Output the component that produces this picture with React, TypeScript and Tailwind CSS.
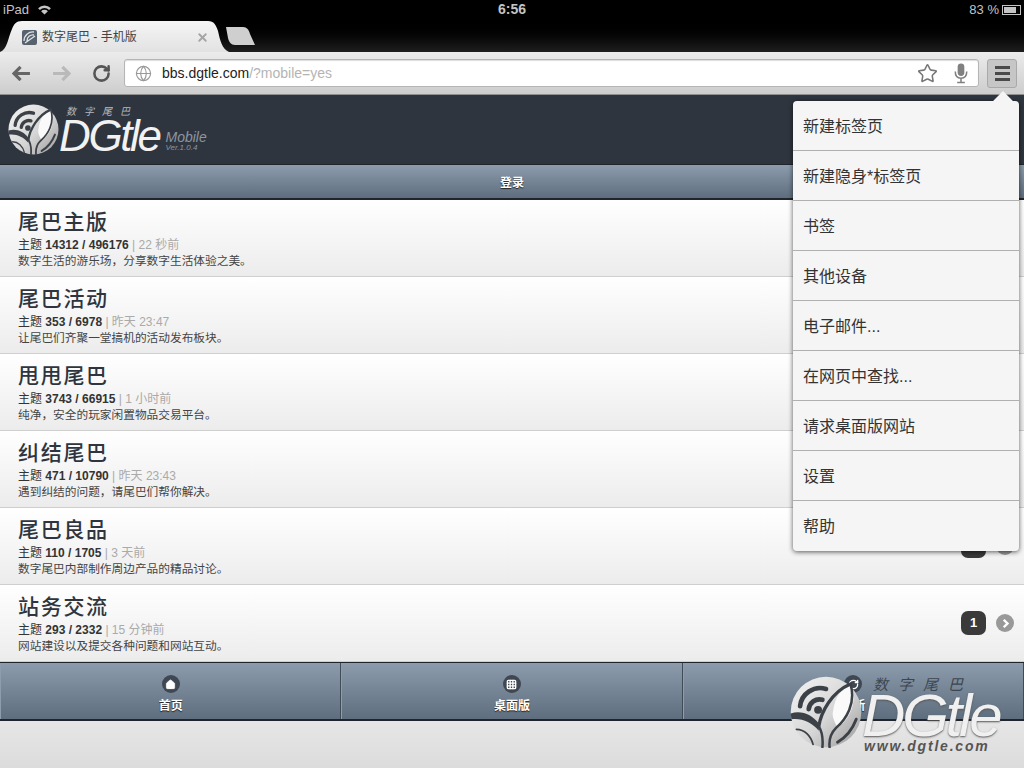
import React from 'react';
import { RotateCw, Star, Globe, X, Home, Grid3x3 } from 'lucide-react';

const FONT = '[font-family:"Liberation_Sans","Noto_Sans_CJK_SC",sans-serif]';

const boards = [
  { title: '尾巴主版', stats: '14312 / 496176', time: '22 秒前', desc: '数字生活的游乐场，分享数字生活体验之美。', badge: '' },
  { title: '尾巴活动', stats: '353 / 6978', time: '昨天 23:47', desc: '让尾巴们齐聚一堂搞机的活动发布板块。', badge: '' },
  { title: '甩甩尾巴', stats: '3743 / 66915', time: '1 小时前', desc: '纯净，安全的玩家闲置物品交易平台。', badge: '' },
  { title: '纠结尾巴', stats: '471 / 10790', time: '昨天 23:43', desc: '遇到纠结的问题，请尾巴们帮你解决。', badge: '' },
  { title: '尾巴良品', stats: '110 / 1705', time: '3 天前', desc: '数字尾巴内部制作周边产品的精品讨论。', badge: '3' },
  { title: '站务交流', stats: '293 / 2332', time: '15 分钟前', desc: '网站建设以及提交各种问题和网站互动。', badge: '1' },
];

const menuItems = ['新建标签页', '新建隐身*标签页', '书签', '其他设备', '电子邮件...', '在网页中查找...', '请求桌面版网站', '设置', '帮助'];

function LogoMark({ id, className }: { id: string; className: string }) {
  return (
    <svg viewBox="0 0 100 100" className={className}>
      <defs>
        <linearGradient id={id} x1="0" y1="0" x2="1" y2="1">
          <stop offset="0" stopColor="#f4f4f4" />
          <stop offset="0.55" stopColor="#d6d6d6" />
          <stop offset="1" stopColor="#9a9a9a" />
        </linearGradient>
      </defs>
      <circle cx="50" cy="50" r="49" fill={`url(#${id})`} />
      <path d="M60 48 C62 30 72 16 84 12 C94 30 86 58 66 72 C60 60 58 55 60 48Z" fill="#fafafa" />
      <path d="M1 52 C16 47 31 54 40 66 L40 76 C30 64 16 58 2 60Z" fill="#3c4148" />
      <g fill="none" stroke="#3c4148" strokeLinecap="round">
        <path d="M26 46 A15 15 0 0 1 45 33" strokeWidth="6.5" />
        <path d="M14 42 A28 28 0 0 1 50 18" strokeWidth="6.5" />
        <path d="M40 70 C43 50 58 22 84 11" strokeWidth="4.5" />
        <path d="M84 11 C92 38 78 60 64 72 C56 80 54 90 55 99" strokeWidth="3.5" />
        <path d="M40 70 C45 78 46 88 45 99" strokeWidth="3.5" />
        <path d="M9 74 C20 74 29 83 32 95" strokeWidth="2.5" />
        <path d="M92 60 C86 76 76 86 66 92" strokeWidth="4" />
      </g>
      <circle cx="39" cy="47" r="5.5" fill="#3c4148" />
    </svg>
  );
}

function RowArrow() {
  return (
    <span className="flex h-[18px] w-[18px] items-center justify-center rounded-full bg-[#999]">
      <svg viewBox="0 0 10 10" className="h-[11px] w-[11px]">
        <path d="M3.4 1.6 L6.8 5 L3.4 8.4" fill="none" stroke="#fff" strokeWidth="2.2" />
      </svg>
    </span>
  );
}

function FooterTab({ icon, label }: { icon: React.ReactNode; label: string }) {
  return (
    <div className="flex flex-1 flex-col items-center border-l border-r border-l-[#8d9dad] border-r-[#3f4b57] pt-[12px]">
      <span className="flex h-[18px] w-[18px] items-center justify-center rounded-full bg-[#3f4852]">{icon}</span>
      <span className="mt-[3px] text-[12px] leading-[20px] font-bold text-white [text-shadow:0_1px_1px_#222]">{label}</span>
    </div>
  );
}

export default function App() {
  return (
    <div className={`relative flex h-[768px] w-[1024px] flex-col overflow-hidden bg-[#ddd] ${FONT}`}>
      {/* status bar */}
      <div className="flex h-[18px] items-center justify-between bg-black pt-[1px] pr-[3px] pl-[3px] text-[13px] text-[#c4c4c4]">
        <div className="flex flex-1 items-center gap-[8px]">
          <span>iPad</span>
          <svg viewBox="0 0 16 12" className="h-[11px] w-[15px]">
            <path d="M1 4.5 A10 10 0 0 1 15 4.5 L13 6.6 A7 7 0 0 0 3 6.6Z M4.3 7.8 A5.4 5.4 0 0 1 11.7 7.8 L8 11.5Z" fill="#c4c4c4" />
          </svg>
        </div>
        <span className="text-[14px] font-bold">6:56</span>
        <div className="flex flex-1 items-center justify-end gap-[3px]">
          <span>83 %</span>
          <span className="flex h-[10px] w-[19px] items-center border border-[#c4c4c4] p-[1px]">
            <span className="h-full w-[83%] bg-[#c4c4c4]" />
          </span>
        </div>
      </div>

      {/* tab strip */}
      <div className="relative h-[34px] bg-gradient-to-b from-black to-[#1e1e1e]">
        <svg viewBox="0 0 260 34" className="absolute top-0 left-0 h-[34px] w-[260px]">
          <defs>
            <linearGradient id="tabFill" x1="0" y1="0" x2="0" y2="1">
              <stop offset="0" stopColor="#f5f5f5" />
              <stop offset="1" stopColor="#e2e2e2" />
            </linearGradient>
          </defs>
          <path d="M0 34 C7 32 8 20 12 11 C14 6 16 3 22 3 L208 3 C214 3 216 7 218 13 C220 22 222 31 229 34Z" fill="url(#tabFill)" />
          <path d="M226 9 L243 9 C247 9 249 12 250 16 L255 27 L235 27 C231 27 229 24 228 20Z" fill="#cfcfcf" />
        </svg>
        <div className="absolute top-[10px] left-[22px] flex h-[18px] w-[187px] items-center">
          <span className="h-[15px] w-[15px] rounded-[2px] bg-[#56626e]">
            <svg viewBox="0 0 15 15" className="h-[15px] w-[15px]">
              <path d="M2 11 A9 9 0 0 1 12 2 M5 11 A6 6 0 0 1 12 5 M3 13 L13 6" fill="none" stroke="#dfe3e8" strokeWidth="1.3" />
            </svg>
          </span>
          <span className="ml-[5px] flex-1 text-[12px] text-[#444]">数字尾巴 - 手机版</span>
          <X className="h-[13px] w-[13px] text-[#a5a5a5]" strokeWidth={3.5} />
        </div>
      </div>

      {/* toolbar */}
      <div className="flex h-[43px] items-center border-b border-b-[#8f8f8f] bg-gradient-to-b from-[#ececec] to-[#cdcdcd] pr-[7px] pl-[12px]">
        <svg viewBox="0 0 20 16" className="h-[15px] w-[19px]">
          <path d="M9 1 L2 8 L9 15 M2.5 8 L19 8" fill="none" stroke="#666" strokeWidth="3.4" />
        </svg>
        <svg viewBox="0 0 20 16" className="ml-[21px] h-[15px] w-[19px]">
          <path d="M11 1 L18 8 L11 15 M17.5 8 L1 8" fill="none" stroke="#b9b9b9" strokeWidth="3.4" />
        </svg>
        <RotateCw className="ml-[21px] h-[19px] w-[19px] text-[#555]" strokeWidth={3.2} />
        <div className="ml-[13px] flex h-[28px] flex-1 items-center rounded-[3px] border border-[#b5b5b5] bg-white pr-[10px] pl-[10px] shadow-[inset_0_1px_1px_#ddd]">
          <Globe className="h-[17px] w-[17px] text-[#999]" strokeWidth={1.6} />
          <span className="ml-[10px] flex-1 text-[14px] text-[#222]">
            bbs.dgtle.com<span className="text-[#b4b4b4]">/?mobile=yes</span>
          </span>
          <Star className="h-[21px] w-[21px] text-[#777]" strokeWidth={1.8} />
          <svg viewBox="0 0 14 22" className="ml-[16px] h-[21px] w-[14px]">
            <rect x="3.5" y="0.5" width="7" height="13" rx="3.5" fill="#808080" />
            <path d="M1 9 C1 14 4 16 7 16 C10 16 13 14 13 9 M7 16 L7 20 M3 20.5 L11 20.5" fill="none" stroke="#808080" strokeWidth="1.6" />
          </svg>
        </div>
        <div className="ml-[8px] flex h-[29px] w-[30px] flex-col items-center justify-center gap-[3px] rounded-[3px] border border-[#a9a9a9] bg-[#c6c6c6]">
          <span className="h-[3px] w-[15px] bg-[#4a4a4a]" />
          <span className="h-[3px] w-[15px] bg-[#4a4a4a]" />
          <span className="h-[3px] w-[15px] bg-[#4a4a4a]" />
        </div>
      </div>

      {/* site header */}
      <div className="flex h-[69px] items-center bg-[#2f353e] pl-[8px]">
        <LogoMark id="logoHead" className="h-[51px] w-[51px]" />
        <div className="flex flex-col">
          <span className="pl-[7px] text-[10px] leading-[12px] tracking-[8px] text-[#b5b9be] italic">数字尾巴</span>
          <span className="text-[44px] leading-[36px] tracking-[-2.4px] text-[#f2f2f2] italic">DGtle</span>
        </div>
        <div className="mt-[22px] ml-[6px] flex flex-col text-[#8b96a2] italic">
          <span className="text-[14px] leading-[14px]">Mobile</span>
          <span className="text-[8px] leading-[8px]">Ver.1.0.4</span>
        </div>
      </div>

      {/* login bar */}
      <div className="flex h-[36px] items-center justify-center border-t border-b-2 border-t-[#20252b] border-b-[#20252b] bg-gradient-to-b from-[#8c9cac] to-[#5e6e7e] pt-[2px] text-[12px] font-bold text-white [text-shadow:0_1px_1px_#222]">
        登录
      </div>

      {/* board list */}
      <div className="flex flex-col">
        {boards.map((b) => (
          <div key={b.title} className="flex h-[77px] items-center border-b border-b-[#cfcfcf] bg-gradient-to-b from-white to-[#ececec] pr-[10px] pl-[18px]">
            <div className="flex flex-1 flex-col pt-[2px]">
              <span className="text-[21px] leading-[26px] font-medium tracking-[1.7px] text-[#2f353e]">{b.title}</span>
              <span className="mt-[2px] text-[12px] leading-[17px] text-[#333]">
                主题 <b className="font-bold">{b.stats}</b>
                <span className="text-[#aaa]"> | {b.time}</span>
              </span>
              <span className="-mt-[1px] text-[11.7px] leading-[16px] text-[#444]">{b.desc}</span>
            </div>
            {b.badge && (
              <span className="mr-[10px] flex h-[24px] w-[25px] items-center justify-center rounded-[7px] bg-[#3a3a3a] text-[13px] font-bold text-white">
                {b.badge}
              </span>
            )}
            <RowArrow />
          </div>
        ))}
      </div>

      {/* footer nav */}
      <div className="flex h-[59px] border-t border-b-2 border-t-[#20252b] border-b-[#20252b] bg-gradient-to-b from-[#8c9cac] to-[#5e6e7e]">
        <FooterTab icon={<Home className="h-[11px] w-[11px] fill-white text-white" strokeWidth={1.5} />} label="首页" />
        <FooterTab icon={<Grid3x3 className="h-[11px] w-[11px] text-white" strokeWidth={3} />} label="桌面版" />
        <FooterTab icon={<RotateCw className="h-[11px] w-[11px] text-white" strokeWidth={3} />} label="刷新" />
      </div>
      <div className="flex-1 bg-gradient-to-b from-[#e6e6e6] to-[#dcdcdc]" />

      {/* chrome menu */}
      <div className="absolute top-[101px] left-[793px] flex w-[226px] flex-col rounded-[4px] bg-[#f5f5f5] shadow-[0_1px_5px_rgba(0,0,0,0.65)]">
        <span className="absolute top-[-7px] right-[9px] h-[14px] w-[14px] rotate-45 bg-[#f5f5f5]" />
        {menuItems.map((item, i) => (
          <div key={item} className={`relative flex h-[50px] items-center pt-[2px] pl-[10px] text-[16px] text-[#333] ${i < menuItems.length - 1 ? 'border-b border-b-[#b0b0b0]' : ''}`}>
            {item}
          </div>
        ))}
      </div>

      {/* watermark */}
      <div className="absolute top-[676px] left-[790px] flex items-start">
        <LogoMark id="logoMark" className="h-[72px] w-[72px]" />
        <div className="flex flex-col italic">
          <span className="pl-[11px] text-[15px] leading-[18px] tracking-[10px] text-[#3d4650]">数字尾巴</span>
          <span className="text-[60px] leading-[44px] tracking-[-3.2px] text-[#f0f0f0] [text-shadow:0_1px_2px_#555]">DGtle</span>
          <span className="pl-[2px] text-[14px] leading-[16px] font-bold tracking-[1.8px] text-[#555]">www.dgtle.com</span>
        </div>
      </div>
    </div>
  );
}
